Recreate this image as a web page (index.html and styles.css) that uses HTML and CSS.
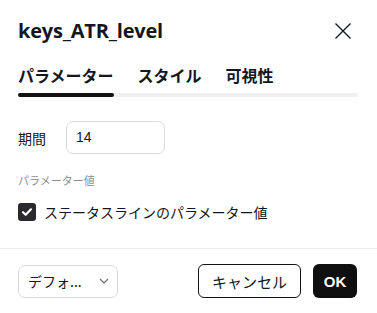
FILE: index.html
```html
<!DOCTYPE html>
<html lang="ja">
<head>
<meta charset="utf-8">
<link rel="stylesheet" href="styles.css">
</head>
<body>
<div class="dialog">
  <div class="header">
    <div class="title">keys_ATR_level</div>
    <button class="close" aria-label="close">
      <svg width="18" height="18" viewBox="0 0 18 18"><path d="M1.5 1.5 L16.5 16.5 M16.5 1.5 L1.5 16.5" stroke="#131722" stroke-width="1.4" fill="none"/></svg>
    </button>
  </div>
  <div class="tabs">
    <div class="tab active">パラメーター</div>
    <div class="tab">スタイル</div>
    <div class="tab">可視性</div>
  </div>
  <div class="track"><div class="thumb"></div></div>
  <div class="body">
    <div class="row">
      <label class="lbl">期間</label>
      <div class="input">14</div>
    </div>
    <div class="section">パラメーター値</div>
    <div class="check-row">
      <span class="box">
        <svg width="12" height="10" viewBox="0 0 12 10"><path d="M2 5.2 L4.7 7.8 L10 2.3" stroke="#fff" stroke-width="2.2" fill="none" stroke-linecap="round" stroke-linejoin="round"/></svg>
      </span>
      <span class="check-label">ステータスラインのパラメーター値</span>
    </div>
  </div>
  <div class="sep"></div>
  <div class="footer">
    <div class="select">
      <span>デフォ...</span>
      <svg width="10" height="6" viewBox="0 0 10 6"><path d="M1 1 L5 5 L9 1" stroke="#6a6d78" stroke-width="1.2" fill="none"/></svg>
    </div>
    <div class="spacer"></div>
    <button class="btn cancel">キャンセル</button>
    <button class="btn ok">OK</button>
  </div>
</div>
</body>
</html>
```
FILE: styles.css
```css
html, body {
  margin: 0;
  padding: 0;
  background: #fff;
}
body {
  font-family: "Noto Sans", "Noto Sans CJK JP", sans-serif;
  color: #131722;
}
.dialog {
  width: 377px;
  height: 313px;
  box-sizing: border-box;
  display: flex;
  flex-direction: column;
}
.header {
  display: flex;
  align-items: center;
  justify-content: space-between;
  padding: 18px 25px 0 18px;
  height: 26px;
}
.title {
  font-family: "Open Sans", "Noto Sans CJK JP", sans-serif;
  font-weight: 700;
  font-size: 20px;
  line-height: 26px;
  letter-spacing: -0.2px;
}
.close {
  border: 0;
  background: none;
  padding: 0;
  width: 18px;
  height: 18px;
  display: flex;
}
.tabs {
  display: flex;
  gap: 24px;
  padding: 20px 18px 0 18px;
}
.tab {
  font-family: "Noto Sans CJK JP", sans-serif;
  font-weight: 700;
  font-size: 16px;
  line-height: 22px;
}
.track {
  margin: 7px 19px 0 18px;
  height: 4px;
  background: #f0f0f0;
  border-radius: 2px;
  display: flex;
}
.thumb {
  width: 96px;
  background: #131313;
  border-radius: 2px;
}
.body {
  padding: 0 18px;
}
.row {
  display: flex;
  align-items: center;
  margin-top: 24px;
}
.lbl {
  font-family: "Noto Sans CJK JP", sans-serif;
  font-size: 14px;
  width: 48px;
  color: #131722;
}
.input {
  width: 99px;
  height: 33px;
  box-sizing: border-box;
  border: 1px solid #dcdcdc;
  border-radius: 7px;
  font-family: "Liberation Sans", sans-serif;
  font-size: 14px;
  line-height: 31px;
  padding-left: 9px;
}
.section {
  margin-top: 18px;
  font-family: "Noto Sans CJK JP", sans-serif;
  font-size: 11px;
  line-height: 16px;
  color: #8a8d96;
}
.check-row {
  display: flex;
  align-items: center;
  margin-top: 14px;
  gap: 8px;
}
.box {
  width: 18px;
  height: 18px;
  border-radius: 3px;
  background: #2a2a2e;
  display: flex;
  align-items: center;
  justify-content: center;
}
.check-label {
  font-family: "Noto Sans CJK JP", sans-serif;
  font-size: 14px;
  line-height: 20px;
}
.sep {
  margin-top: 26px;
  height: 1px;
  background: #ececec;
}
.footer {
  display: flex;
  align-items: center;
  padding: 15px 20px 0 18px;
  gap: 12px;
}
.select {
  width: 100px;
  height: 33px;
  box-sizing: border-box;
  border: 1px solid #dcdcdc;
  border-radius: 7px;
  display: flex;
  align-items: center;
  justify-content: space-between;
  padding: 0 8px 0 9px;
  font-family: "Noto Sans CJK JP", sans-serif;
  font-size: 14px;
  color: #131722;
}
.spacer {
  flex: 1;
}
.btn {
  height: 34px;
  box-sizing: border-box;
  border-radius: 6px;
  font-family: "Noto Sans CJK JP", sans-serif;
  font-size: 15px;
  padding: 0;
  cursor: pointer;
}
.cancel {
  width: 103px;
  background: #fff;
  border: 1px solid #131313;
  color: #131722;
}
.ok {
  width: 44px;
  background: #0f0f0f;
  border: 0;
  color: #fff;
  font-family: "Liberation Sans", sans-serif;
  font-weight: 700;
  font-size: 15px;
}
```
